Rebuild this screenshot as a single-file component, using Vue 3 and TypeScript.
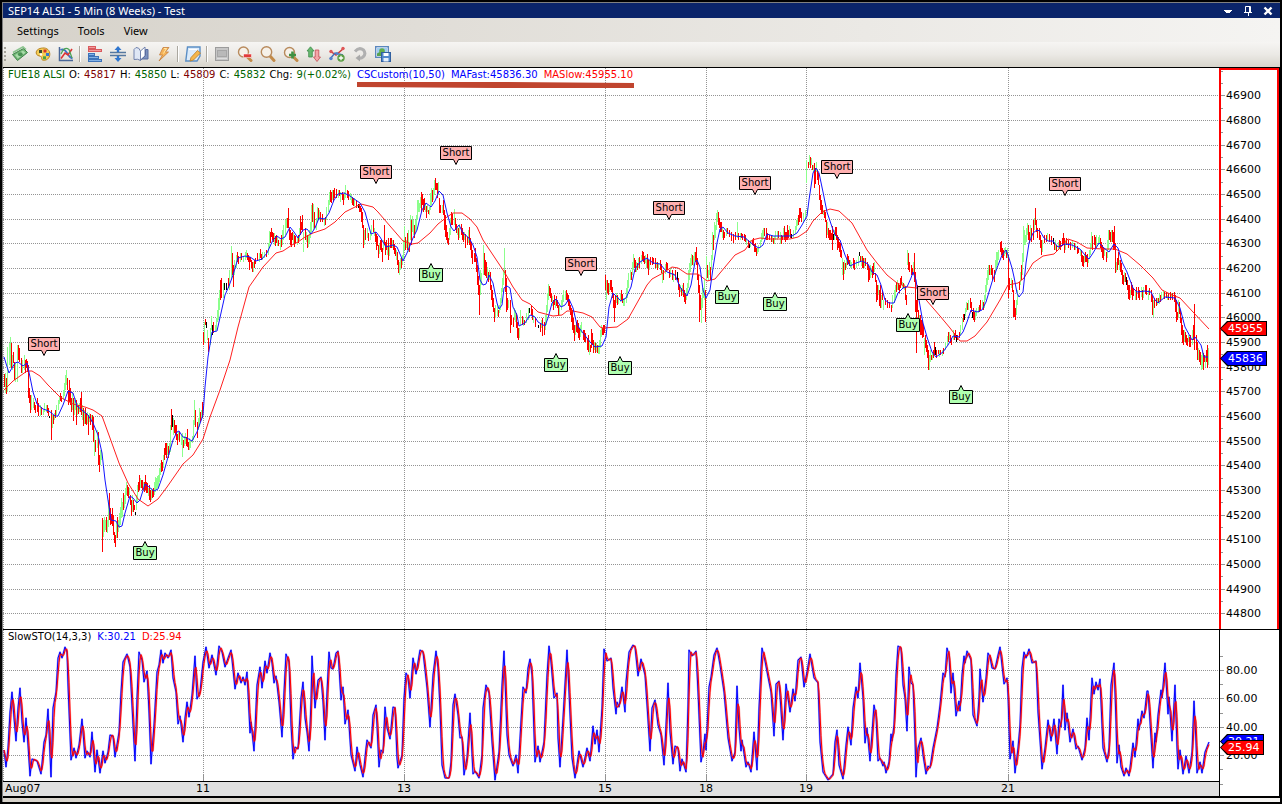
<script setup lang="ts">
type Point = [number, number]
interface Signal { kind: 'Short' | 'Buy'; x: number; y: number }
interface Quote { text: string; tone: string }

/* Plot areas in chart units */
const LEFT = 3
const WIDTH = 1216
const PRICE_TOP = 68
const PRICE_HEIGHT = 561
const STO_TOP = 630
const STO_HEIGHT = 151

const parse = (s: string): Point[] =>
  s.trim().split(/\s+/).map((p) => p.split(',').map(Number) as Point)

const toPoints = (pts: Point[]): string => pts.map((p) => p.join(',')).join(' ')

const maFast = parse(`4,357 9,373 15,363 18,362 23,366 27,363 30,377 33,392 37,404 43,409 49,411 55,416 58,416 63,405 68,391 73,393
77,406 83,411 88,415 93,423 98,435 102,453 105,480 108,500 111,520 116,521 119,527 122,526 125,513 130,496 133,498 137,503 140,500
145,484 149,487 154,491 158,489 163,475 168,457 173,440 177,432 179,431 183,437 187,438 192,441 197,432 203,415 205,387 208,357
212,332 217,331 221,313 225,295 229,286 233,275 238,258 245,256 250,257 256,261 262,259 267,253 273,240 277,236 281,239 285,237
290,227 294,232 298,238 303,230 307,229 311,234 315,228 319,218 325,219 329,213 334,200 338,194 344,193 350,196 360,203 365,212
371,234 376,232 380,237 386,247 393,245 397,247 403,261 407,253 413,238 417,230 422,210 426,203 431,207 435,201 439,191 443,195
447,213 451,227 454,231 459,225 463,233 469,238 473,245 477,257 480,280 483,285 486,284 489,275 493,283 497,303 499,309 502,305
504,288 507,286 510,288 513,307 517,315 519,326 525,323 530,315 535,317 538,322 545,326 548,318 552,303 556,299 561,307 565,305
569,299 573,308 577,325 583,333 590,342 595,347 602,346 606,337 609,307 613,293 617,297 621,301 626,298 631,287 635,269 640,262
647,258 653,263 660,264 667,272 675,275 680,287 687,296 691,285 695,262 697,260 700,267 703,290 706,298 710,290 713,268 717,243
720,229 723,227 728,233 735,236 744,237 750,242 755,246 759,248 763,245 767,234 773,236 783,236 792,236 797,233 802,225 807,216
809,200 813,173 816,168 819,173 823,192 827,212 832,227 835,235 840,240 845,255 850,266 856,263 862,261 868,264 872,272 877,275
881,285 885,300 889,303 894,303 898,293 903,288 907,287 911,278 913,272 916,280 919,300 923,323 927,337 932,352 936,357 943,352
948,345 953,336 959,337 963,332 967,322 971,310 977,312 982,310 986,302 992,282 997,268 1002,255 1006,250 1008,255 1012,268
1014,277 1017,293 1019,297 1023,292 1026,263 1029,243 1033,233 1037,230 1040,231 1044,238 1048,241 1053,241 1058,247 1065,244
1072,245 1080,249 1085,255 1089,259 1093,253 1099,243 1104,248 1109,252 1114,244 1118,248 1122,262 1127,272 1133,288 1137,292
1145,291 1151,292 1155,300 1158,303 1165,297 1175,298 1180,308 1185,327 1192,340 1195,337 1201,345 1204,357 1208,357`)

const maSlow = parse(`4,390 13,381 27,371 32,371 40,376 48,385 60,397 73,404 85,407 93,410 102,416 110,438 119,463 128,483 138,499
148,506 158,499 167,487 183,464 193,455 203,439 210,417 220,390 230,360 238,327 249,287 263,267 276,253 283,251 292,245 298,242
305,237 313,233 325,229 335,222 345,212 353,208 361,204 373,207 378,212 390,226 403,241 412,244 418,243 430,233 438,224 447,217
453,213 462,213 470,219 477,227 483,240 493,255 505,273 513,287 522,300 530,304 538,312 553,316 562,315 567,311 573,311 583,313
592,317 600,327 603,328 617,327 628,319 637,303 647,285 652,279 663,273 672,267 678,268 687,274 698,274 707,281 715,279 725,267
735,255 745,250 752,240 760,238 770,239 790,239 798,237 807,231 813,221 822,212 830,209 839,211 852,223 867,250 877,263 887,275
897,283 907,287 917,288 927,301 940,316 950,328 960,341 967,341 975,336 987,322 1000,300 1008,285 1018,283 1024,278 1033,263
1043,256 1054,254 1062,246 1068,239 1077,242 1087,248 1103,249 1115,249 1127,254 1140,265 1153,278 1162,290 1172,295 1180,298
1193,312 1209,329`)

/* Bars: direction (g up, r down, k flat), x, high, low */
const bars = `r4 374 387,g5 373 393,r6 378 394,g7 347 392,g9 343 365,g10 337 368,r11 343 368,g12 355 370,r13 352 363,r14 362 380,g15 363 382,
g17 345 382,r18 345 360,r19 348 362,r21 358 373,g22 360 373,g24 355 370,r25 360 373,r26 359 368,r27 361 372,r28 365 398,r29 388 403,
r30 395 413,g31 395 410,g33 398 408,r34 402 410,r35 405 413,r37 398 412,r38 403 416,g40 405 416,r41 407 415,g43 410 415,g44 403 412,
g46 405 412,r47 405 413,r48 408 416,k49 416 418,r51 410 440,g52 415 428,r53 415 424,g54 413 420,r55 410 418,g56 405 415,g58 400 410,
g59 396 404,r60 393 401,r61 396 402,g63 390 400,g64 383 396,g65 375 390,g66 370 385,r67 378 390,r68 390 405,r69 380 402,r70 388 405,
r71 398 412,g72 392 410,r73 398 421,g74 400 415,g75 398 410,r76 400 425,g77 403 415,r78 405 414,g79 403 412,r80 398 412,r81 392 415,
g82 405 420,r83 408 426,g84 410 424,r85 408 424,r86 413 425,g87 412 424,r88 415 435,g89 413 422,r90 414 425,g91 415 422,r92 415 430,
r93 417 442,g94 430 456,r95 440 452,g97 430 448,r98 432 465,r99 455 472,g100 450 465,g101 450 460,r102 518 552,g103 520 537,g104 517 532,
g105 520 530,r106 517 532,g107 520 533,g108 500 527,r109 493 520,r110 508 525,r111 514 524,r112 508 526,r113 515 535,r114 532 543,
r115 535 547,g116 523 538,r117 517 538,g118 520 532,g119 513 528,g120 507 525,g121 498 518,g122 502 517,r123 493 510,g124 495 508,
g125 488 504,g126 482 495,r127 485 496,r128 487 498,g129 488 495,r130 495 505,r131 500 516,g132 495 512,r133 500 512,r134 505 510,
k135 512 515,g136 495 510,g137 485 502,r138 482 492,r139 475 490,g140 478 488,r141 480 488,r142 480 490,g143 482 490,r144 482 492,
r145 475 490,r146 482 493,r147 483 493,g148 488 496,r149 485 500,r150 490 502,g151 488 500,r152 490 498,r153 488 497,g154 482 495,
g155 477 492,g156 478 490,g157 476 488,g158 475 487,g159 468 482,g160 463 475,r161 460 472,r162 462 471,g163 455 468,r164 448 460,
r165 443 455,r166 443 458,g167 443 455,r168 446 458,g169 443 455,g170 425 452,r171 409 430,k172 415 427,g173 418 435,r174 420 433,
r175 425 435,r176 425 440,r177 434 445,g178 432 440,r179 432 442,g181 435 445,g182 433 457,r183 440 448,g184 436 446,g185 433 444,
r186 437 446,r187 429 447,r188 442 450,g189 438 450,g190 440 448,g192 436 443,g193 420 440,g194 400 425,r195 410 427,r197 422 438,
g198 418 430,g199 408 427,r200 412 422,g201 410 420,r202 402 418,r203 332 345,g204 322 343,r205 319 325,k206 322 328,g207 330 340,
r208 338 352,g210 328 345,g211 316 330,k212 325 335,r213 322 333,g215 325 332,g216 318 330,g217 310 322,g218 298 320,g219 290 310,
r220 280 300,r221 278 298,g223 283 298,k224 283 290,k226 283 290,r228 278 288,g229 270 290,g231 246 280,r232 253 275,r233 265 287,
g234 260 275,g236 255 268,r237 252 262,r238 256 264,g240 253 262,r241 253 260,g243 256 262,g245 252 260,g246 250 258,r247 253 260,
r248 255 262,r249 257 270,r250 257 262,r251 260 268,r252 262 272,g253 262 272,r254 260 268,r255 258 264,r257 253 260,g259 253 262,
r260 249 258,r261 254 260,g262 252 260,g264 252 258,r266 250 257,g268 243 255,g269 231 248,r270 232 243,r271 228 237,r272 232 240,
r273 233 242,g274 233 245,r275 236 246,r276 235 243,g277 237 246,r278 240 246,g280 240 250,r281 235 247,g282 230 245,g283 225 240,
g285 220 235,g286 218 228,r287 218 228,r288 208 228,r289 228 240,r290 230 245,r291 233 247,r292 232 240,g293 233 243,r294 235 247,
r295 236 243,g297 236 245,r298 235 243,g299 228 240,r300 216 235,r301 222 230,r302 215 232,g303 232 252,r305 228 240,g306 232 242,
r307 235 248,g308 235 247,g309 230 243,g310 222 238,g311 205 232,r312 203 222,g313 204 230,r314 212 228,g316 218 230,g317 207 222,
r318 208 220,g319 210 220,r320 212 222,r322 214 222,g324 218 226,r325 217 225,g326 207 220,g328 200 212,g329 192 205,r330 190 202,
r331 192 203,g332 190 200,r333 190 202,r334 188 198,r336 189 198,g338 190 198,r339 190 196,g340 192 202,r342 192 200,r343 194 205,
g344 192 200,g345 185 198,r347 190 198,r348 191 200,g350 193 200,g351 195 203,r352 197 205,r353 198 206,g354 198 206,r356 200 208,
k358 204 208,r359 204 212,r360 206 212,r361 208 222,r362 212 228,r363 225 248,g364 230 245,r365 228 240,g367 228 238,r368 233 241,
g370 232 240,g371 225 236,r373 220 232,g374 228 236,r375 232 242,r376 234 250,r377 236 246,r378 245 258,g379 244 254,r380 240 250,
r381 240 252,r382 248 262,g383 240 250,r384 225 245,r385 242 255,r386 240 250,g387 245 255,r388 238 260,g389 246 256,r390 238 248,
r391 238 248,g392 240 248,r393 240 250,r394 244 254,r395 248 256,g396 250 260,r397 252 265,r398 260 273,g399 262 275,g400 258 270,
r401 258 268,g402 255 265,g403 240 260,g404 226 250,r405 237 250,g406 240 248,r407 233 250,g408 230 252,r409 243 252,g410 215 240,
r411 220 245,g412 216 232,g413 220 235,r414 225 238,g415 220 233,g416 215 230,g417 200 220,g418 200 212,g419 203 212,g420 197 208,
r421 192 212,r422 194 205,r423 199 212,r424 198 210,g425 203 212,r426 206 218,g427 205 212,r428 210 214,g429 207 215,g430 193 210,
g431 188 205,r432 190 202,g433 188 200,g434 180 195,r435 178 190,r436 183 190,r437 183 198,g438 182 195,r439 198 213,r440 205 213,
g442 205 213,r443 200 215,r444 210 230,r445 215 237,r446 225 240,r447 232 243,r448 238 245,g449 228 240,g450 218 235,r451 212 225,
r452 214 225,g454 209 225,r455 218 230,r456 224 233,g457 226 235,r458 228 240,g459 224 238,r461 224 235,r462 228 240,r463 232 242,
g464 232 240,r465 234 248,r467 237 245,g468 230 243,r469 227 245,r470 238 250,r471 242 258,r472 250 264,r474 253 262,r475 248 262,
r476 258 272,r477 265 285,r478 276 295,r479 285 315,g480 270 295,g481 273 285,g483 245 275,r484 253 275,r485 260 276,r486 262 278,
g487 267 278,r488 272 282,g489 270 280,r490 272 290,r491 285 300,r492 290 307,r493 298 312,r494 308 322,g495 305 318,g497 305 316,
r498 310 317,g499 305 313,g500 298 310,g501 288 303,g502 278 292,g503 270 285,g504 248 275,r505 270 292,r506 278 312,r507 298 310,
g508 300 308,r510 300 333,r511 315 325,r513 318 327,g514 308 320,g515 310 322,r516 313 328,r517 322 338,r518 328 340,g519 328 338,
g520 310 325,r522 316 325,g523 318 326,r524 320 325,g526 313 323,g528 308 320,k529 308 313,r531 305 315,r532 309 320,g533 315 323,
r535 318 327,k538 325 328,r540 323 332,g541 320 328,r542 318 336,r544 322 335,g545 315 330,g546 305 325,g547 293 312,g548 284 300,
r549 286 296,r550 288 298,r551 293 302,g552 296 306,r553 300 310,r554 295 305,g555 300 308,r556 296 306,r557 300 308,r558 305 315,
g559 305 315,g561 300 310,g562 295 306,g563 290 302,g565 291 300,r566 290 300,r567 293 302,r568 295 306,r569 300 310,r570 305 315,
r571 308 322,r572 310 330,r573 318 333,r574 325 341,g575 325 335,r576 322 332,r577 320 333,r578 323 338,r579 328 340,g580 325 337,
g581 322 333,r583 330 340,r584 330 342,r585 333 342,r587 338 350,r588 335 352,g589 340 355,r590 345 352,r591 329 348,r592 333 345,
r593 340 353,g594 342 350,r595 343 353,g596 343 352,r597 345 353,g598 345 354,g599 340 354,g600 330 348,g601 325 337,r602 328 335,
r603 325 335,r604 325 333,r605 275 290,g606 280 300,r607 280 293,r608 283 295,g609 283 292,r610 280 290,r611 280 292,r612 287 298,
r613 293 308,r614 300 322,r615 295 308,g616 293 303,r617 295 305,g618 297 304,g620 293 302,r621 290 300,r622 294 303,g623 298 306,
g624 298 306,g626 288 303,g627 280 298,g628 273 288,g630 270 280,r631 272 280,g632 262 275,g633 254 270,r634 258 268,r635 260 272,
g636 262 272,r637 263 270,g638 258 268,r639 257 268,g641 255 264,r642 251 260,r643 252 262,r644 256 264,g645 255 263,g646 258 268,
r647 254 268,r648 260 275,g649 260 270,r650 257 265,r652 257 265,r653 258 264,r655 258 268,g656 262 268,r657 262 270,g658 263 268,
r660 260 270,r661 264 273,g662 270 283,r663 270 280,g665 264 274,r666 262 270,r667 263 270,r669 270 278,g670 268 277,r672 270 280,
g673 273 282,r675 270 280,k677 272 280,r678 278 290,r679 284 297,g680 285 292,r681 288 296,g682 285 295,r683 283 297,r684 290 302,
r685 293 304,g686 288 300,g687 283 294,g688 270 288,g689 263 280,g690 258 272,g691 254 266,r692 255 265,g693 256 266,g694 252 262,
r695 252 262,r696 247 265,r697 258 280,r698 275 293,r699 285 322,r700 295 310,g701 298 323,g702 288 308,g703 288 298,g704 280 300,
r705 290 322,g706 256 280,r707 265 278,g708 270 280,g709 262 275,r710 267 280,g711 255 270,g712 232 260,r713 235 250,g714 222 240,
g715 225 238,g716 213 230,g717 210 222,r718 212 225,r719 218 228,r720 222 232,r721 222 232,g722 228 238,r723 230 240,r724 232 238,
g726 228 236,r727 228 234,r729 230 237,r731 232 241,r733 234 243,r735 232 240,g737 222 238,r738 233 240,g740 233 240,r741 233 238,
r742 234 240,r744 234 241,r745 235 242,g746 238 245,r748 240 248,k749 243 248,g750 240 247,r752 240 245,r753 238 246,r754 244 252,
r755 243 252,r756 248 256,g757 248 254,g758 245 252,g760 240 248,g761 233 242,g762 230 240,g763 228 238,r764 228 236,r766 228 240,
r767 233 240,r769 235 240,r771 236 242,g772 235 242,r773 238 244,g774 236 244,g775 231 240,g777 231 240,r778 231 238,g780 232 244,
r781 235 244,r782 236 240,g783 228 238,r784 226 240,r785 232 242,r786 232 240,r787 225 240,r788 230 238,g789 226 236,r790 229 238,
k791 234 238,g793 230 238,g795 226 234,g796 220 230,g797 218 226,r798 215 225,r799 208 222,r800 208 218,r801 212 222,g803 213 223,
g805 210 218,g806 160 183,g807 208 214,r808 162 168,g809 155 165,r810 157 168,g811 158 165,r812 165 170,g813 165 172,r814 163 188,
r815 168 184,g816 162 172,r817 170 180,r818 173 185,r819 185 200,r820 195 210,r821 200 214,r822 205 214,g823 210 215,r824 210 218,
r825 212 222,r826 220 238,g827 222 235,r828 228 238,r829 230 240,r830 230 240,r831 233 240,r832 226 250,k833 234 240,g834 230 240,
r835 227 235,r836 227 240,r837 235 250,r838 237 248,r839 242 252,r840 243 257,r841 250 258,g842 258 275,r843 262 280,g844 260 274,
r845 263 270,g846 258 268,r847 254 265,r848 256 264,r849 260 266,g850 260 268,g851 262 268,r853 258 268,r854 260 270,g856 260 268,
g858 256 266,k859 252 256,r860 256 262,g861 256 266,r862 256 268,r863 258 268,g864 258 268,r865 258 266,r867 262 270,r868 265 282,
r869 268 280,g870 265 278,g871 268 275,r872 266 278,r873 263 275,g874 262 272,r875 273 282,r876 280 302,r877 285 300,g878 285 295,
r879 290 306,r880 285 308,g881 295 308,r882 290 300,g883 300 310,r885 298 305,r887 300 308,r889 302 308,r891 305 312,g892 295 308,
g894 290 303,g895 285 298,r896 282 292,g897 280 290,r898 283 290,r899 285 293,r900 278 288,r901 276 285,g902 282 288,r903 283 288,
g904 284 290,r905 286 300,r906 295 305,g907 250 265,r908 253 270,r909 262 272,r911 265 275,r912 268 275,g913 262 275,r914 253 282,
r915 272 312,r916 300 353,r917 285 312,r918 310 322,g919 315 325,r920 315 335,r921 320 335,r922 320 338,r923 325 337,g924 338 355,
r925 335 348,r926 340 352,r927 345 358,r928 350 370,g929 355 370,g930 350 362,r931 355 360,g932 352 360,r933 350 358,r934 342 355,
k935 347 355,r936 350 358,r938 350 354,g939 350 357,r940 350 355,g942 350 356,r943 348 354,g945 342 350,g947 336 345,r948 332 342,
g949 332 340,r950 335 343,r951 338 345,g953 330 340,r954 333 340,r955 330 338,k956 335 342,r957 335 340,r959 332 338,g960 325 335,
g962 318 330,r963 314 322,k964 314 320,g965 308 316,g966 302 312,r967 303 310,g968 300 310,r970 298 308,r971 302 312,k972 312 318,
r973 308 320,r974 312 322,g975 310 320,g976 308 316,g978 307 313,r979 305 312,r980 300 310,g982 300 308,r983 302 310,g984 295 308,
g985 285 300,g986 278 292,g987 270 285,g988 265 280,r989 265 275,g990 268 275,r991 265 275,r992 268 280,r994 270 282,g995 260 275,
g996 252 268,g997 252 265,g998 250 260,r1000 242 252,r1001 241 255,r1002 248 258,r1003 250 260,g1004 248 256,g1005 247 254,
r1006 250 258,g1007 248 258,r1008 255 298,r1009 278 290,g1011 278 288,r1012 280 292,r1013 290 317,r1014 300 317,r1015 308 320,
g1016 300 315,g1017 290 305,r1019 282 290,g1020 272 285,r1021 265 280,g1022 253 275,g1023 226 262,g1024 230 245,g1025 235 245,
g1026 228 242,g1027 223 235,r1028 225 240,r1029 232 243,g1030 225 238,r1031 228 242,r1033 220 240,g1034 218 230,r1035 208 225,
r1036 220 232,r1037 228 238,r1039 228 240,r1040 235 248,r1041 240 255,g1042 240 252,r1044 235 243,r1046 235 242,g1047 233 240,
r1049 234 242,r1051 236 245,k1053 238 244,r1054 243 250,g1055 240 250,r1056 245 252,g1058 242 250,r1059 240 248,r1060 241 250,
r1062 238 246,r1063 233 245,r1064 238 253,g1065 240 250,r1066 238 245,r1068 240 248,r1070 242 250,g1072 240 248,r1074 243 250,
g1075 243 250,r1077 246 254,r1078 248 253,g1080 250 256,r1081 250 262,r1082 255 266,r1083 256 267,g1084 255 263,r1085 252 262,
r1086 255 262,r1087 254 267,g1088 258 263,g1089 250 258,g1090 243 255,g1091 232 248,r1092 236 250,r1094 235 245,r1095 237 248,
g1096 235 248,g1098 237 245,g1099 235 243,r1100 238 248,r1101 242 252,r1102 245 258,r1103 248 260,g1104 248 256,r1106 252 262,
g1107 240 258,g1108 230 250,r1109 230 240,r1110 232 242,g1111 230 242,r1112 230 242,r1113 232 250,r1114 226 250,r1115 243 273,
g1116 262 272,r1117 258 270,r1118 252 265,g1119 260 270,r1120 260 272,r1121 263 275,r1122 270 284,r1123 275 285,g1124 272 282,
r1125 273 282,k1126 277 285,r1127 280 290,r1128 285 299,r1129 285 300,g1130 290 298,r1131 282 295,r1132 285 300,r1133 288 296,
g1135 290 300,r1136 287 300,r1138 287 298,r1139 290 300,g1141 287 297,r1142 290 300,g1143 287 298,r1145 285 294,r1146 285 295,
g1148 290 300,r1149 288 295,r1151 290 302,r1152 295 315,g1153 300 317,r1154 298 308,r1156 298 306,g1157 298 305,r1158 298 303,
g1159 294 304,r1160 295 302,g1161 292 300,g1163 290 298,r1164 292 299,r1166 292 298,g1167 295 300,r1168 293 300,r1170 292 300,
g1171 293 298,r1172 293 300,r1174 292 302,r1175 295 312,r1176 300 322,r1177 312 320,g1178 300 318,r1179 302 314,r1180 310 323,
r1181 318 335,r1182 325 343,r1183 330 345,g1184 330 342,r1185 332 342,r1186 335 345,r1187 338 346,g1188 335 342,r1189 337 347,
r1190 335 347,g1192 330 345,r1193 325 340,r1194 304 350,r1196 335 350,r1197 342 360,g1198 348 360,r1199 350 362,r1200 352 365,
g1201 355 370,g1202 350 369,r1203 353 370,r1204 355 362,g1205 355 367,r1206 350 362,r1207 345 368,g1208 348 365`

const barPath = (kind: string): string =>
  bars.split(',').map((b) => b.trim()).filter((b) => b[0] === kind)
    .map((b) => {
      const [x, high, low] = b.slice(1).split(' ')
      return `M${x}.5 ${high}V${low}`
    }).join('')

const barSets = ['g', 'r', 'k'].map((k) => ({ cls: `bar-${k}`, d: barPath(k) }))

const stoK = parse(`4,750 6,767 8,748 10,712 12,692 14,718 16,741 18,708 20,688 22,722 24,742 26,718 28,745 30,776 32,759 37,761 41,774
44,742 46,735 48,709 51,777 53,708 56,692 58,658 60,652 62,658 65,647 67,652 68,685 71,760 74,748 76,758 79,745 82,719 85,758 87,751
90,757 92,732 95,772 97,750 100,773 103,751 105,763 108,752 110,735 113,736 115,757 119,732 121,692 123,662 127,654 130,667 133,725
135,761 137,698 139,652 142,660 144,682 147,671 149,712 151,764 154,725 157,672 159,665 161,650 163,663 165,653 168,658 171,650
173,678 176,692 178,724 180,716 183,742 185,718 187,702 189,717 192,695 195,656 197,699 200,692 203,662 206,647 209,668 212,655
216,675 219,646 222,652 225,667 228,658 231,650 235,689 238,673 241,683 243,677 245,685 247,672 250,733 251,722 254,751 257,685
260,667 262,688 265,661 267,673 270,653 272,663 274,683 276,676 279,702 282,737 284,692 286,654 289,662 291,725 293,759 295,747
298,749 301,698 303,682 305,718 307,732 309,751 311,702 312,656 315,708 318,680 321,677 323,702 325,740 327,692 329,652 331,668
333,669 336,653 338,651 341,700 343,687 345,724 348,710 351,755 355,771 357,747 360,765 363,777 366,748 367,740 371,748 373,715
376,705 379,767 381,750 383,753 385,707 387,728 390,739 393,707 395,708 397,758 398,768 402,755 404,698 406,673 408,677 410,698
413,658 416,674 420,650 423,652 427,688 430,727 433,675 436,651 438,668 440,708 442,765 445,778 449,778 451,762 453,705 455,694
458,715 460,738 462,737 464,775 467,758 470,713 473,774 475,771 479,778 482,755 483,708 486,685 489,693 492,742 495,780 499,752
502,685 504,651 507,735 509,755 513,766 516,755 518,773 520,738 523,687 526,693 528,668 530,659 532,675 535,762 538,746 540,762
544,742 547,675 549,646 551,662 554,698 557,693 558,738 560,767 563,718 567,650 569,692 572,758 575,778 579,751 583,767 587,748
590,761 593,726 595,744 597,730 599,752 602,708 604,649 607,661 611,658 613,688 616,714 617,702 619,707 622,687 625,712 626,682
629,652 633,645 635,647 638,676 641,659 645,675 647,705 650,751 652,708 655,700 658,725 661,735 664,765 666,725 668,683 670,732
673,764 675,746 678,748 680,771 682,759 686,772 688,705 689,650 692,656 696,651 698,692 701,762 703,752 705,734 706,750 709,687
711,677 714,655 717,648 720,665 724,692 728,738 732,761 735,752 737,686 739,728 741,751 742,740 746,767 748,762 751,772 754,732
757,770 759,708 762,648 765,661 768,677 771,692 774,736 776,684 779,681 783,740 786,684 790,712 793,689 795,701 798,660 801,657
804,687 807,672 810,654 814,678 818,683 820,742 823,772 828,780 833,774 835,742 837,730 839,765 843,779 846,745 848,727 851,745
853,708 856,687 858,698 860,663 863,698 865,743 867,728 870,761 874,705 876,715 878,761 880,758 883,766 884,762 886,773 889,762
891,734 892,741 894,725 896,675 898,646 901,648 903,685 905,698 907,731 909,667 911,683 913,685 915,738 916,777 918,748 921,738
923,755 926,774 928,766 930,768 933,748 937,728 940,705 943,673 945,677 947,648 949,655 951,693 953,673 956,716 959,701 960,711
962,675 964,656 965,663 967,651 971,660 973,715 977,726 979,698 980,669 983,702 986,678 988,653 990,657 992,668 995,669 998,655
1000,647 1004,684 1007,678 1008,695 1010,759 1013,741 1015,773 1018,748 1020,725 1022,668 1024,652 1026,658 1029,649 1032,663
1036,661 1038,712 1042,769 1045,748 1048,720 1051,741 1054,719 1057,754 1059,719 1061,727 1063,685 1065,730 1067,713 1070,742
1073,729 1076,749 1078,746 1082,760 1085,748 1087,718 1089,740 1092,678 1094,694 1096,682 1098,690 1100,679 1103,748 1107,762
1109,748 1111,685 1114,663 1116,722 1117,763 1119,745 1121,767 1124,776 1126,768 1129,776 1133,743 1135,757 1138,719 1139,730
1142,711 1144,718 1147,691 1148,691 1150,722 1153,768 1155,733 1156,742 1158,715 1161,690 1162,698 1165,663 1168,714 1169,697
1172,741 1175,685 1177,748 1178,769 1180,750 1183,774 1186,756 1189,773 1192,752 1194,701 1196,742 1197,773 1200,762 1202,773
1205,752 1209,742`)

/* %D is the three-step moving average of %K */
function smooth(pts: Point[]): Point[] {
  const dense: number[] = []
  for (let i = 1; i < pts.length; i++) {
    const [x0, y0] = pts[i - 1]
    const [x1, y1] = pts[i]
    for (let x = x0; x < x1; x++) dense.push(y0 + ((y1 - y0) * (x - x0)) / (x1 - x0))
  }
  dense.push(pts[pts.length - 1][1])
  return dense.map((_, i): Point => {
    const part = dense.slice(Math.max(0, i - 2), i + 1)
    return [pts[0][0] + i, Math.round((part.reduce((a, b) => a + b, 0) / part.length) * 10) / 10]
  })
}
const stoD = smooth(stoK)

const signals: Signal[] = [
  { kind: 'Short', x: 44, y: 355 }, { kind: 'Short', x: 376, y: 183 }, { kind: 'Short', x: 456, y: 164 },
  { kind: 'Short', x: 581, y: 275 }, { kind: 'Short', x: 669, y: 219 }, { kind: 'Short', x: 755, y: 194 },
  { kind: 'Short', x: 837, y: 178 }, { kind: 'Short', x: 933, y: 304 }, { kind: 'Short', x: 1065, y: 195 },
  { kind: 'Buy', x: 145, y: 541 }, { kind: 'Buy', x: 431, y: 263 }, { kind: 'Buy', x: 556, y: 353 },
  { kind: 'Buy', x: 620, y: 356 }, { kind: 'Buy', x: 727, y: 285 }, { kind: 'Buy', x: 775, y: 292 },
  { kind: 'Buy', x: 908, y: 313 }, { kind: 'Buy', x: 961, y: 385 },
]

const days = [
  { label: '11', x: 203 }, { label: '13', x: 404 }, { label: '15', x: 605 },
  { label: '18', x: 706 }, { label: '19', x: 806 }, { label: '21', x: 1008 },
]

const priceY = (p: number): number => Math.round(95.4 + (46900 - p) * 0.24665)
const stoY = (v: number): number => Math.round(670 + (80 - v) * 1.42)

const priceLabels = Array.from({ length: 22 }, (_, i) => 46900 - i * 100)
const priceTicks = Array.from({ length: 45 }, (_, i) => 47000 - i * 50)
const stoLabels = [80, 60, 40, 20]
const stoTicks = [90, 80, 70, 60, 50, 40, 30, 20, 10, 0]

const pct = (n: number): string => `${n * 100}%`
const plotPos = (s: Signal) => ({ left: pct((s.x - LEFT) / WIDTH), top: pct((s.y - PRICE_TOP) / PRICE_HEIGHT) })
const priceTop = (y: number) => ({ top: pct((y - PRICE_TOP) / PRICE_HEIGHT) })
const stoTop = (y: number) => ({ top: pct((y - STO_TOP) / (STO_HEIGHT + 15)) })
const dayLeft = (x: number) => ({ left: pct((x - LEFT) / WIDTH) })

const quotes: Quote[] = [
  { text: 'FUE18 ALSI', tone: 'up' }, { text: 'O:', tone: 'plain' }, { text: '45817', tone: 'down' },
  { text: 'H:', tone: 'plain' }, { text: '45850', tone: 'up' }, { text: 'L:', tone: 'plain' },
  { text: '45809', tone: 'down' }, { text: 'C:', tone: 'plain' }, { text: '45832', tone: 'up' },
  { text: 'Chg:', tone: 'plain' }, { text: '9(+0.02%)', tone: 'up' },
]
const studies: Quote[] = [
  { text: 'CSCustom(10,50)', tone: 'blue' }, { text: 'MAFast:45836.30', tone: 'blue' }, { text: 'MASlow:45955.10', tone: 'red' },
]
</script>

<template>
  <main class="window">
    <header class="titlebar">
      <h1 class="title">SEP14 ALSI - 5 Min (8 Weeks) - Test</h1>
      <div class="window-buttons">
        <button aria-label="Window menu"><svg width="12" height="12"><path d="M2 5h8v1h-1v1h-1v1h-4v-1h-1v-1h-1z" fill="#fff" /></svg></button>
        <button aria-label="Pin"><svg width="12" height="12"><path d="M3.5 7.500V1.500H8.500V7.500M2 7.500H10M6.500 8V11M7.500 2V7" fill="none" stroke="#fff" /></svg></button>
        <button aria-label="Close"><svg width="12" height="12"><path d="M2.500 2.500L9.500 9.500M9.500 2.500L2.500 9.500" stroke="#fff" stroke-width="2.400" /></svg></button>
      </div>
    </header>

    <nav class="menubar" aria-label="Main menu">
      <button>Settings</button><button>Tools</button><button>View</button>
    </nav>

    <div class="toolbar" role="toolbar" aria-label="Chart tools">
      <span class="grip" />
      <button aria-label="Trade">
        <svg viewBox="0 0 16 16"><path d="M.5 8.500L11.500 2.500L15.500 6.500L5.500 14.500Z" fill="#6fb573" stroke="#3f8249" /><path d="M1 6.500L11 .800L14 3.500" fill="none" stroke="#8bc48e" stroke-width="1.500" /><path d="M3 9L11 4.500L13.500 6.800L5.800 12.500Z" fill="#a9dba9" /><ellipse cx="8.300" cy="8.300" rx="2.400" ry="2" fill="#4a9254" /></svg>
      </button>
      <button aria-label="Colours">
        <svg viewBox="0 0 16 16"><path d="M7.500 2C12 1.500 15 4.500 14.800 8.500C14.600 12.500 11.500 14.500 8.500 14.300C5.500 14 7.500 11 5.500 10.300C3.500 9.700 1.500 9.500 1.200 7C1 4 4 2.300 7.500 2Z" fill="#f4cd55" stroke="#b98420" /><rect x="4" y="4" width="3" height="3" fill="#3d4b2f" /><rect x="8.500" y="3.500" width="3" height="3" fill="#d5332a" /><rect x="11" y="7" width="3" height="3" fill="#3478d0" /><rect x="8" y="10.300" width="3" height="3" fill="#4aa43f" /><circle cx="6" cy="8.500" r="1.200" fill="#fff" /></svg>
      </button>
      <button aria-label="Indicators">
        <svg viewBox="0 0 16 16"><path d="M1.500 1V14.500H15" fill="none" stroke="#4a6798" stroke-width="1.500" /><path d="M2.500 4Q6 2 9 7T14.500 12.500" fill="none" stroke="#3f72c8" stroke-width="1.800" /><path d="M3 12.500L7 7L10 9L14 3" fill="none" stroke="#d33" stroke-width="1.600" /><path d="M3 8Q6 0 11 3.500L14 12" fill="none" stroke="#49a253" stroke-width="1.200" /></svg>
      </button>
      <span class="separator" />
      <button aria-label="Price levels">
        <svg viewBox="0 0 16 16"><path d="M1 0H9V3H15V6H1Z" fill="#d95a5e" /><path d="M2 1.500H8M2 4.500H14" stroke="#f29b9b" /><path d="M1 7H8V10H12V13H15V16H1Z" fill="#3d73b9" /><path d="M2 8.500H7M2 11.500H11M2 14.500H14" stroke="#83b2e6" /></svg>
      </button>
      <button aria-label="Split vertically">
        <svg viewBox="0 0 16 16"><path d="M0 6.500H16M0 9.500H16" stroke="#56789f" stroke-width="1.300" /><path d="M8 0L11.500 4H9.200V6H6.800V4H4.500ZM8 16L11.500 12H9.200V10H6.800V12H4.500Z" fill="#2f76cf" /></svg>
      </button>
      <button aria-label="Journal">
        <svg viewBox="0 0 16 16"><path d="M1 3.500L3 1.500Q6 1 7.500 5V14.500Q5 12.500 1 13.500Z" fill="#dfe7f5" stroke="#7182ad" /><path d="M7.500 5L12 1V10L7.500 14.500Z" fill="#fff" stroke="#7182ad" /><path d="M12.500 3.500H15V13H8.500L12.500 9.500Z" fill="#7b91bf" stroke="#5b6c9e" /></svg>
      </button>
      <button aria-label="Quick action">
        <svg viewBox="0 0 16 16"><path d="M7 1.500H13L9.500 6H12.500L3 15L6.500 9H3.500Z" fill="#f6b45a" stroke="#bf7431" stroke-width=".7" /><path d="M8 2.500H10.500L7.500 7.500" fill="none" stroke="#ffe9a8" /></svg>
      </button>
      <span class="separator" />
      <button aria-label="Edit notes">
        <svg viewBox="0 0 16 16"><path d="M2.500 1H15V10L12 15H.800Z" fill="#dcebfa" stroke="#5a8ec5" stroke-width="1.400" /><path d="M4 3.500H12" stroke="#fff" /><path d="M12.500 4.500L15.500 7L8.500 14L5 15L6 11.500Z" fill="#f5b64b" stroke="#b97d2a" stroke-width=".8" /></svg>
      </button>
      <span class="separator" />
      <button aria-label="Select area" disabled>
        <svg viewBox="0 0 16 16"><rect x="1.500" y="1.500" width="13" height="13" fill="#c6c6c6" stroke="#9c9c9c" /><rect x="3.500" y="4.500" width="9" height="6" fill="#b9b9b9" stroke="#a6a6a6" /><path d="M3 12.500H13" stroke="#ddd" /></svg>
      </button>
      <button aria-label="Zoom out">
        <svg viewBox="0 0 16 16"><path d="M9.500 10L14 14.500" stroke="#c28a49" stroke-width="3" stroke-linecap="round" /><circle cx="6.500" cy="6" r="5" fill="#f6f1e9" stroke="#b88a5c" stroke-width="1.400" /><rect x="6.500" y="8" width="8" height="3.500" fill="#e23b3b" stroke="#fff" stroke-width=".5" /></svg>
      </button>
      <button aria-label="Zoom">
        <svg viewBox="0 0 16 16"><path d="M10 10L14 14.500" stroke="#c28a49" stroke-width="3" stroke-linecap="round" /><circle cx="6.500" cy="6" r="5.200" fill="#f6f1e9" stroke="#b88a5c" stroke-width="1.400" /></svg>
      </button>
      <button aria-label="Zoom in">
        <svg viewBox="0 0 16 16"><path d="M9.500 10L14 14.500" stroke="#c28a49" stroke-width="3" stroke-linecap="round" /><circle cx="6.500" cy="6.500" r="5" fill="#f6f1e9" stroke="#b88a5c" stroke-width="1.400" /><path d="M9.500 5.500V12.500M6 9H13" stroke="#3f9142" stroke-width="2.600" /></svg>
      </button>
      <button aria-label="Buy and sell markers">
        <svg viewBox="0 0 16 16"><path d="M4.500 .8L8 5H6.300V11H2.700V5H1Z" fill="#69b971" stroke="#3c8c49" stroke-width=".8" /><path d="M11 15.500L7.500 11H9.200V4H12.800V11H14.500Z" fill="#f4a5a8" stroke="#c24b53" stroke-width=".8" /></svg>
      </button>
      <button aria-label="Add trend line">
        <svg viewBox="0 0 16 16"><path d="M1 5L7 9L15 2" fill="none" stroke="#cc3b3b" stroke-width="1.500" /><path d="M1 13L6 7L14 9" fill="none" stroke="#4771bd" stroke-width="1.500" /><g fill="#df5656"><circle cx="2" cy="5.500" r="1.700" /><circle cx="14" cy="2.500" r="1.700" /></g><g fill="#5482cb"><circle cx="2" cy="12.500" r="1.700" /><circle cx="8" cy="7.500" r="1.500" /></g><circle cx="12" cy="12" r="3.700" fill="#5a9d42" /><path d="M12 9.800V14.200M9.800 12H14.200" stroke="#fff" stroke-width="1.300" /></svg>
      </button>
      <button aria-label="Refresh" disabled>
        <svg viewBox="0 0 16 16"><path d="M3 5.500Q7 .5 11.500 4Q14.500 8 11 11Q9.500 12.500 7 12" fill="none" stroke="#b0b0b0" stroke-width="3" /><path d="M8 8.500V15.500L3.500 12Z" fill="#a9a9a9" /></svg>
      </button>
      <button aria-label="Save image">
        <svg viewBox="0 0 16 16"><rect x=".7" y=".7" width="12.600" height="10.600" fill="#fff" stroke="#5b87bd" stroke-width="1.400" /><rect x="2" y="2" width="10" height="8" fill="#9fcdf2" /><path d="M2 10V7.500Q7 4 12 7V10Z" fill="#58a24f" /><circle cx="7" cy="5" r="2.800" fill="#64ad4c" /><rect x="6.500" y="6.500" width="9" height="9" fill="#5289ce" stroke="#315f9f" /><rect x="8.500" y="7" width="5" height="3" fill="#fff" /><rect x="8.500" y="12" width="5" height="3.500" fill="#e5effb" /></svg>
      </button>
    </div>

    <section class="chart" aria-label="Price chart">
      <div class="price-plot">
        <svg class="canvas" :viewBox="`${LEFT} ${PRICE_TOP} ${WIDTH} ${PRICE_HEIGHT}`" preserveAspectRatio="none">
          <g class="grid">
            <line v-for="p in priceLabels" :key="p" :x1="LEFT" :x2="LEFT + WIDTH" :y1="priceY(p) + 0.5" :y2="priceY(p) + 0.5" />
            <line v-for="d in days" :key="d.x" :x1="d.x + 0.5" :x2="d.x + 0.5" :y1="PRICE_TOP" :y2="PRICE_TOP + PRICE_HEIGHT" />
            <line :x1="LEFT + 0.5" :x2="LEFT + 0.5" :y1="PRICE_TOP" :y2="PRICE_TOP + PRICE_HEIGHT" />
          </g>
          <path v-for="set in barSets" :key="set.cls" class="bar" :class="set.cls" :d="set.d" />
          <polyline class="ma-slow" :points="toPoints(maSlow)" />
          <polyline class="ma-fast" :points="toPoints(maFast)" />
          <polygon class="marker-line" points="357,82 495,82 634,83 634,88 495,88 357,87" />
        </svg>
        <p class="legend">
          <span v-for="(q, i) in quotes" :key="i" :class="q.tone">{{ q.text }}</span>
          <span v-for="(q, i) in studies" :key="'s' + i" :class="['study', q.tone]">{{ q.text }}</span>
        </p>
        <span v-for="(s, i) in signals" :key="i" class="signal" :class="s.kind.toLowerCase()" :style="plotPos(s)">
          <svg v-if="s.kind === 'Short'" width="32" height="20"><path d="M.5.5H31.500V13.500H18.500L16 18.500L13.500 13.500H.500Z" /></svg>
          <svg v-else width="24" height="20"><path d="M.5 5.500H9.500L12 .500L14.500 5.500H23.500V18.500H.500Z" /></svg>
          <span class="signal-text">{{ s.kind }}</span>
        </span>
      </div>

      <div class="price-axis">
        <div class="scale">
          <i v-for="t in priceTicks" :key="'t' + t" class="tick" :class="{ major: t % 100 === 0 && t < 47000 }" :style="priceTop(priceY(t))" />
          <span v-for="p in priceLabels" :key="p" class="axis-label" :style="priceTop(priceY(p))">{{ p }}</span>
          <span class="flag red-flag" :style="priceTop(328)">45955</span>
          <span class="flag blue-flag" :style="priceTop(358)">45836</span>
        </div>
      </div>

      <div class="sto-plot">
        <svg class="canvas" :viewBox="`${LEFT} ${STO_TOP} ${WIDTH} ${STO_HEIGHT}`" preserveAspectRatio="none">
          <g class="grid">
            <line v-for="v in stoLabels" :key="v" :x1="LEFT" :x2="LEFT + WIDTH" :y1="stoY(v) + 0.5" :y2="stoY(v) + 0.5" />
            <line v-for="d in days" :key="d.x" :x1="d.x + 0.5" :x2="d.x + 0.5" :y1="STO_TOP" :y2="STO_TOP + STO_HEIGHT" />
            <line :x1="LEFT + 0.5" :x2="LEFT + 0.5" :y1="STO_TOP" :y2="STO_TOP + STO_HEIGHT" />
          </g>
          <path class="day-tick" :d="days.map((d) => `M${d.x + 0.5} 775V781`).join('')" />
          <polyline class="sto-halo-k" :points="toPoints(stoK)" />
          <polyline class="sto-k" :points="toPoints(stoK)" />
          <polyline class="sto-halo-d" :points="toPoints(stoD)" />
          <polyline class="sto-d" :points="toPoints(stoD)" />
        </svg>
        <p class="legend">
          <span class="plain">SlowSTO(14,3,3)</span><span class="blue study">K:30.21</span><span class="red study">D:25.94</span>
        </p>
      </div>

      <div class="sto-axis">
        <i v-for="t in stoTicks" :key="'t' + t" class="tick" :class="{ major: stoLabels.includes(t) }" :style="stoTop(stoY(t))" />
        <span v-for="v in stoLabels" :key="v" class="axis-label" :style="stoTop(stoY(v))">{{ v.toFixed(2) }}</span>
        <span class="flag blue-flag small-flag" :style="stoTop(741)">30.21</span>
        <span class="flag red-flag small-flag" :style="stoTop(747)">25.94</span>
      </div>

      <div class="time-axis">
        <span class="first-day">Aug07</span>
        <span v-for="d in days" :key="d.x" class="day" :style="dayLeft(d.x)">{{ d.label }}</span>
      </div>
    </section>
    <footer class="bottom-edge" />
  </main>
</template>

<style>
html,
body,
#app {
  height: 100%;
}
body {
  margin: 0;
  background: #000;
  overflow: hidden;
}
</style>

<style scoped>
.window {
  box-sizing: border-box;
  height: 100vh;
  display: flex;
  flex-direction: column;
  border: 2px solid #000;
  background: #000;
  box-shadow: inset 1px 1px 0 #808080;
  padding: 1px 0 0 1px;
  font-family: "DejaVu Sans", "Noto Sans", sans-serif;
  font-size: 11px;
  color: #000;
}
button {
  border: 0;
  padding: 0;
  background: none;
  font: inherit;
  color: inherit;
}
.titlebar {
  flex: none;
  display: flex;
  align-items: center;
  justify-content: space-between;
  height: 15px;
  padding: 0 6px 0 5px;
  background: #0a246a;
  color: #fff;
}
.title {
  margin: 0;
  font-family: "Noto Sans", sans-serif;
  font-size: 11px;
  font-weight: 400;
  line-height: 15px;
}
.window-buttons {
  display: flex;
  gap: 8px;
}
.window-buttons button {
  display: flex;
  width: 12px;
  height: 12px;
}
.menubar {
  flex: none;
  display: flex;
  align-items: center;
  gap: 19px;
  height: 24px;
  padding: 0 14px;
  background: linear-gradient(90deg, #d6d2ca, #f5f4f2);
  font-family: "Noto Sans", sans-serif;
}
.toolbar {
  flex: none;
  box-sizing: border-box;
  display: flex;
  align-items: center;
  height: 25px;
  padding-bottom: 1px;
  background: linear-gradient(#f6f5f3, #ebe9e5 50%, #d8d5cc);
}
.toolbar button {
  display: flex;
  justify-content: center;
  width: 23px;
}
.toolbar svg {
  width: 16px;
  height: 16px;
}
.grip {
  width: 2px;
  height: 15px;
  margin: 0 2px 0 1px;
  background: repeating-linear-gradient(#a6a39c 0 2px, transparent 2px 4px);
}
.separator {
  box-sizing: border-box;
  width: 2px;
  height: 16px;
  margin: 0 2px;
  border-left: 1px solid #aaa79f;
  border-right: 1px solid #fff;
}
.chart {
  flex: 1;
  min-height: 0;
  display: grid;
  grid-template-columns: minmax(0, 1fr) 60px;
  grid-template-rows: minmax(0, 561fr) minmax(0, 151fr) 14px;
  row-gap: 1px;
  border: solid #000;
  border-width: 1px 1px 2px 0;
}
.price-plot,
.sto-plot,
.price-axis,
.sto-axis {
  position: relative;
  background: #fff;
}
.canvas {
  position: absolute;
  inset: 0;
  width: 100%;
  height: 100%;
}
.canvas * {
  vector-effect: non-scaling-stroke;
}
.grid line {
  stroke: #949494;
  stroke-dasharray: 1 1;
  shape-rendering: crispEdges;
}
.bar {
  fill: none;
  shape-rendering: crispEdges;
}
.bar-g { stroke: #8cff8c; }
.bar-r { stroke: #f00; }
.bar-k { stroke: #000; }
.ma-fast,
.ma-slow,
.sto-k,
.sto-d,
.sto-halo-k,
.sto-halo-d {
  fill: none;
  stroke-linejoin: round;
}
.ma-fast { stroke: #1414ff; }
.ma-slow { stroke: #ff2020; }
.sto-k { stroke: #00f; }
.sto-d { stroke: #f00; }
.sto-halo-k {
  stroke: #00f;
  stroke-width: 2px;
  opacity: 0.35;
}
.sto-halo-d {
  stroke: #f00;
  stroke-width: 2px;
  opacity: 0.35;
}
.marker-line { fill: #c0452f; }
.day-tick {
  stroke: #949494;
  shape-rendering: crispEdges;
}
.legend {
  position: relative;
  display: flex;
  gap: 4px;
  margin: 0;
  padding-left: 5px;
  font-size: 10px;
  line-height: 14px;
  white-space: nowrap;
}
.study { margin-left: 2px; }
.plain { color: #000; }
.up { color: #006400; }
.down { color: #800000; }
.blue { color: #00f; }
.red { color: #f00; }
.signal {
  position: absolute;
  font-size: 10px;
  line-height: 12px;
  text-align: center;
}
.signal svg {
  display: block;
}
.signal path {
  stroke: #000;
}
.signal-text {
  position: absolute;
  left: 0;
  right: 0;
}
.short {
  width: 32px;
  margin: -18px 0 0 -16px;
}
.short path { fill: #ffb0b0; }
.short .signal-text { top: 1px; }
.buy {
  width: 24px;
  margin-left: -12px;
}
.buy path { fill: #b0ffb0; }
.buy .signal-text { top: 6px; }
.price-axis {
  box-sizing: border-box;
  border: 2px solid #f00;
  border-bottom: 0;
}
.scale {
  position: absolute;
  inset: -2px 0 0 -2px;
}
.sto-axis {
  grid-row: 2 / 4;
  grid-column: 2;
  box-sizing: border-box;
  border-left: 1px solid #000;
}
.tick {
  position: absolute;
  left: 2px;
  width: 2px;
  height: 1px;
  background: #949494;
}
.sto-axis .tick { left: 0; width: 3px; }
.tick.major,
.sto-axis .tick.major { width: 4px; }
.axis-label {
  position: absolute;
  left: 7px;
  margin-top: -6px;
  line-height: 14px;
}
.sto-axis .axis-label { left: 6px; }
.flag {
  position: absolute;
  left: 1px;
  box-sizing: border-box;
  width: 47px;
  height: 15px;
  margin-top: -7px;
  padding-left: 8px;
  line-height: 15px;
  color: #fff;
  background: #000;
  clip-path: polygon(0 50%, 7px 0, 100% 0, 100% 100%, 7px 100%);
  isolation: isolate;
}
.flag::before {
  content: "";
  position: absolute;
  inset: 1px;
  z-index: -1;
  clip-path: polygon(0 50%, 7px 0, 100% 0, 100% 100%, 7px 100%);
}
.small-flag {
  left: 0;
  width: 44px;
  padding-left: 8px;
}
.red-flag::before { background: #f00; }
.blue-flag::before { background: #00f; }
.time-axis {
  position: relative;
  grid-row: 3;
  grid-column: 1;
  background: #e0e0e0;
  line-height: 13px;
}
.first-day { margin-left: 2px; }
.day {
  position: absolute;
  top: 0;
  transform: translateX(-50%);
}
.bottom-edge {
  flex: none;
  height: 4px;
  background: linear-gradient(90deg, #d6d2ca, #f5f4f2);
}
</style>
